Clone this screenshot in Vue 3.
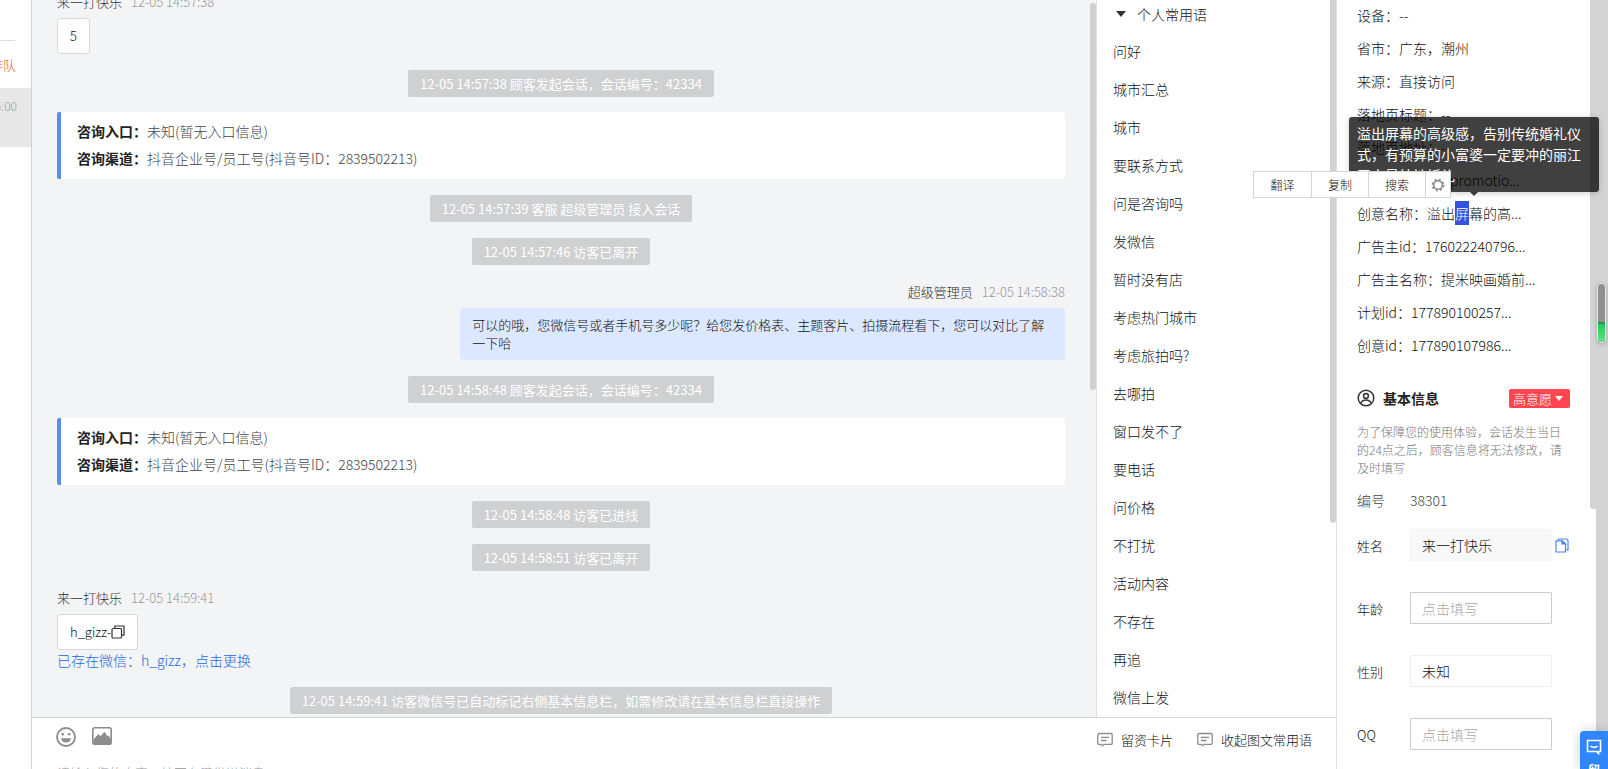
<script setup>
import { ref } from 'vue'

// --- 会话消息 ---
const messages = [
  { type: 'guest', name: '来一打快乐', time: '12-05 14:57:38', text: '5' },
  { type: 'notice', text: '12-05 14:57:38 顾客发起会话，会话编号：42334' },
  { type: 'entry', from: '未知(暂无入口信息)', channel: '抖音企业号/员工号(抖音号ID：2839502213)' },
  { type: 'notice', text: '12-05 14:57:39 客服 超级管理员 接入会话' },
  { type: 'notice', text: '12-05 14:57:46 访客已离开' },
  { type: 'staff', name: '超级管理员', time: '12-05 14:58:38', text: '可以的哦，您微信号或者手机号多少呢？给您发价格表、主题客片、拍摄流程看下，您可以对比了解一下哈' },
  { type: 'notice', text: '12-05 14:58:48 顾客发起会话，会话编号：42334' },
  { type: 'entry', from: '未知(暂无入口信息)', channel: '抖音企业号/员工号(抖音号ID：2839502213)' },
  { type: 'notice', text: '12-05 14:58:48 访客已进线' },
  { type: 'notice', text: '12-05 14:58:51 访客已离开' },
  { type: 'guest', name: '来一打快乐', time: '12-05 14:59:41', text: 'h_gizz-', copy: true, link: '已存在微信：h_gizz，点击更换' },
  { type: 'notice', text: '12-05 14:59:41 访客微信号已自动标记右侧基本信息栏，如需修改请在基本信息栏直接操作' }
]

// --- 常用语 ---
const phrases = [
  '问好', '城市汇总', '城市', '要联系方式', '问是咨询吗', '发微信', '暂时没有店', '考虑热门城市', '考虑旅拍吗?',
  '去哪拍', '窗口发不了', '要电话', '问价格', '不打扰', '活动内容', '不存在', '再追', '微信上发'
]

// --- 访客信息 ---
const visitTop = ['设备：--', '省市：广东，潮州', '来源：直接访问', '落地页标题：--', '落地页地址：--', '计划名称：dy_promotio...']
const visitBottom = ['广告主id：176022240796...', '广告主名称：提米映画婚前...', '计划id：177890100257...', '创意id：177890107986...']

const open = ref(true)
const draft = ref('')
const form = ref({ name: '来一打快乐', age: '', gender: '未知', qq: '' })
</script>

<template>
  <div class="page">
    <aside class="queue">
      <div class="queue-top"></div>
      <div class="queue-tab"><span>排队</span></div>
      <div class="queue-item"><span>14:56:00</span></div>
    </aside>

    <main class="main">
      <div class="work">
        <section class="chat">
          <div v-for="(m, i) in messages" :key="i" class="msg" :class="m.type">
            <template v-if="m.type === 'notice'">
              <span class="pill">{{ m.text }}</span>
            </template>
            <template v-else-if="m.type === 'entry'">
              <p><b>咨询入口：</b>{{ m.from }}</p>
              <p><b>咨询渠道：</b>{{ m.channel }}</p>
            </template>
            <template v-else>
              <div class="msg-head"><span class="who">{{ m.name }}</span><span class="time">{{ m.time }}</span></div>
              <div class="bubble">
                {{ m.text }}<svg v-if="m.copy" class="copy" viewBox="0 0 14 14" fill="none" stroke="#333" stroke-width="1.2">
                  <rect x="1" y="3.5" width="9.5" height="9.5" rx="1" />
                  <path d="M3.8 3.5V1h9.2v9.2h-2.5" />
                </svg>
              </div>
              <a v-if="m.link" href="#" class="swap">{{ m.link }}</a>
            </template>
          </div>
          <i class="thumb chat-thumb"></i>
        </section>

        <section class="phrases">
          <button class="group" @click="open = !open"><i class="caret"></i>个人常用语</button>
          <ul v-if="open">
            <li v-for="p in phrases" :key="p">{{ p }}</li>
          </ul>
          <i class="thumb phrase-thumb"></i>
        </section>
      </div>

      <footer class="editor">
        <div class="tools">
          <button class="tool" aria-label="表情">
            <svg width="20" height="20" viewBox="0 0 20 20">
              <circle cx="10" cy="10" r="9" fill="none" stroke="#8c8c8c" stroke-width="1.8" />
              <circle cx="6.8" cy="7.3" r="1.3" fill="#8c8c8c" />
              <circle cx="13.2" cy="7.3" r="1.3" fill="#8c8c8c" />
              <path d="M5 11.2h10c-.4 2.7-2.4 4.3-5 4.3s-4.6-1.6-5-4.3z" fill="#8c8c8c" />
            </svg>
          </button>
          <button class="tool" aria-label="图片">
            <svg width="20" height="18" viewBox="0 0 20 18">
              <rect x=".8" y=".8" width="18.4" height="16.4" rx="2" fill="none" stroke="#8c8c8c" stroke-width="1.6" />
              <path d="M1.500 12.500 6.500 7l2 2.300L12.500 4.800l3 4.400 1-.9 2.500 4.200V17h-17.500z" fill="#8c8c8c" />
            </svg>
          </button>
          <button v-for="t in ['留资卡片', '收起图文常用语']" :key="t" class="tool text-tool">
            <svg width="16" height="16" viewBox="0 0 16 16" fill="none" stroke="#8c8c8c" stroke-width="1.3">
              <path d="M2 2.500h12a1.200 1.200 0 0 1 1.200 1.200v8.500a1.200 1.200 0 0 1-1.200 1.200H7L5.500 14.700 4 13.400H2A1.200 1.200 0 0 1 .8 12.200v-8.500A1.200 1.200 0 0 1 2 2.500z" />
              <path d="M4 6.300h8M4 9.500h5.500" />
            </svg>
            {{ t }}
          </button>
        </div>
        <textarea v-model="draft" aria-label="消息" placeholder="请输入您的内容，按回车键发送消息"></textarea>
      </footer>
    </main>

    <aside class="detail">
      <div class="visit">
        <p v-for="v in visitTop" :key="v">{{ v }}</p>
        <p class="creative">
          创意名称：溢出<mark>屏</mark>幕的高...
          <span class="tip" role="tooltip">溢出屏幕的高级感，告别传统婚礼仪式，有预算的小富婆一定要冲的丽江天空最纯地婚礼</span>
          <span class="pick">
            <button>翻译</button>
            <button>复制</button>
            <button>搜索</button>
            <button class="gear" aria-label="设置">
              <svg width="14" height="14" viewBox="0 0 14 14" fill="none" stroke="#8a8a8a">
                <circle cx="7" cy="7" r="4.3" stroke-width="1.6" />
                <circle cx="7" cy="7" r="5.6" stroke-width="1.6" stroke-dasharray="2.2 2.198" />
              </svg>
            </button>
          </span>
        </p>
        <p v-for="v in visitBottom" :key="v">{{ v }}</p>
      </div>

      <div class="base-head">
        <svg width="18" height="18" viewBox="0 0 18 18" fill="none" stroke="#333" stroke-width="1.5">
          <circle cx="9" cy="9" r="7.8" />
          <circle cx="9" cy="6.9" r="2.4" />
          <path d="M3.8 14.3c.8-2.3 2.7-3.3 5.2-3.3s4.4 1 5.2 3.3" />
        </svg>
        <h3>基本信息</h3>
        <button class="intent">高意愿<i></i></button>
      </div>
      <p class="note">为了保障您的使用体验，会话发生当日的24点之后，顾客信息将无法修改，请及时填写</p>
      <div class="number"><span>编号</span><span>38301</span></div>

      <div class="row">
        <label for="f-name">姓名</label>
        <input id="f-name" v-model="form.name" class="filled" />
        <button class="row-copy" aria-label="复制姓名">
          <svg width="14" height="15" viewBox="0 0 14 15" fill="none" stroke="#4a86e8" stroke-width="1.2">
            <path d="M1 2.8h6.2L10.5 6v8H1z" />
            <path d="M7 2.8V6h3.5z" fill="#4a86e8" />
            <path d="M3.3 2.5V1h8.200L13 2.500v9.500h-2.200" />
          </svg>
        </button>
      </div>
      <div class="row">
        <label for="f-age">年龄</label>
        <input id="f-age" v-model="form.age" placeholder="点击填写" />
      </div>
      <div class="row">
        <label for="f-gender">性别</label>
        <select id="f-gender" v-model="form.gender">
          <option>未知</option>
          <option>男</option>
          <option>女</option>
        </select>
      </div>
      <div class="row">
        <label for="f-qq">QQ</label>
        <input id="f-qq" v-model="form.qq" placeholder="点击填写" />
      </div>
      <i class="thumb detail-thumb"></i>
    </aside>

    <div class="strip"></div>
    <div class="gauge"><i></i></div>
    <button class="service">
      <svg width="16" height="16" viewBox="0 0 16 16" fill="none" stroke="#fff" stroke-width="1.6">
        <path d="M1.500 1.500h13v11H12.500v2L10.500 12.500h-9z" />
        <path d="M4.5 7c1.800 1.800 5.200 1.800 7 0" />
      </svg>
      <span>留言</span>
    </button>
  </div>
</template>

<style>
body { margin: 0; }
</style>

<style scoped>
.page { position: relative; display: flex; height: 100vh; overflow: hidden; background: #fff; color: #111; font-family: 'Noto Sans CJK SC', sans-serif; font-size: 14px; font-weight: 300; }
* { box-sizing: border-box; }
p, h3, ul { margin: 0; padding: 0; }
button, input, select, textarea { font: inherit; color: inherit; margin: 0; padding: 0; border: 0; background: none; border-radius: 0; outline: none; }
button { cursor: pointer; }
svg { display: block; flex: none; }
.thumb { position: absolute; right: 0; top: 0; width: 6px; border-radius: 3px; background: #d2d2d2; }

/* 左侧排队列表 */
.queue { width: 32px; flex: none; border-right: 1px solid #d0d3d8; overflow: hidden; }
.queue-top { width: 15px; height: 41px; border-bottom: 1px solid #ddd; }
.queue-tab, .queue-item { display: flex; justify-content: flex-end; white-space: nowrap; }
.queue-tab { height: 47px; line-height: 48px; padding-right: 15px; color: #e8601c; font-size: 13px; }
.queue-item { height: 59px; line-height: 36px; padding-right: 14px; background: #e8e8e8; color: #999; font-size: 12px; }

/* 会话 */
.main { flex: 1; min-width: 0; display: flex; flex-direction: column; }
.work { flex: 1; min-height: 0; display: flex; }
.chat { position: relative; flex: 1; min-width: 0; display: flex; flex-direction: column; justify-content: flex-end; padding: 0 31px 3px 25px; background: #f3f4f6; overflow: hidden; }
.chat-thumb { top: 3px; height: 54%; background: #d0d0d0; }
.msg { flex: none; margin-top: 16px; }
.notice { display: flex; justify-content: center; }
.pill { padding: 0 12px; line-height: 27px; border-radius: 2px; background: #cfd0d2; color: #fff; font-size: 13px; font-weight: 400; }
.entry { padding: 6px 16px 7px; border-left: 4px solid #5590ee; border-radius: 2px; background: #fff; color: #444; line-height: 27px; }
.notice + .entry { margin-top: 15px; }
.entry b { color: #222; font-weight: 700; }
.guest, .staff { display: flex; flex-direction: column; align-items: flex-start; font-size: 13px; }
.staff { align-items: flex-end; }
.msg-head { display: flex; gap: 9px; height: 22px; line-height: 22px; margin-bottom: 5px; }
.who { color: #333; }
.time { color: #999; }
.bubble { display: flex; align-items: center; padding: 8px 12px; border: 1px solid #d5d7da; border-radius: 3px; background: #fff; line-height: 18px; }
.staff .bubble { width: 60%; padding: 8px 12px; border: 0; background: #dce8ff; }
.copy { width: 14px; height: 14px; }
.swap { color: #1f66e0; text-decoration: none; font-size: 14px; line-height: 21px; }

/* 常用语 */
.phrases { position: relative; width: 240px; flex: none; border-left: 1px solid #dcdee2; overflow: hidden; }
.phrase-thumb { height: 73%; border-radius: 0 0 3px 3px; }
.group { display: flex; align-items: center; gap: 11px; height: 28px; margin-bottom: 4px; padding-left: 19px; }
.caret { border: 5px solid transparent; border-top: 6px solid #333; border-bottom: 0; }
.phrases ul { list-style: none; }
.phrases li { padding-left: 16px; line-height: 38px; }

/* 输入区 */
.editor { height: 52px; flex: none; border-top: 1px solid #d0d3d8; overflow: hidden; }
.tools { display: flex; align-items: flex-start; gap: 16px; height: 44px; padding: 9px 24px 0; }
.tool { display: flex; align-items: center; }
.text-tool { gap: 8px; height: 24px; margin-left: 8px; font-size: 13px; }
.tool:nth-child(3) { margin-left: auto; }
.editor textarea { display: block; width: 100%; height: 40px; padding: 0 25px; resize: none; font-size: 13px; line-height: 22px; }
.editor textarea::placeholder { color: #999; }

/* 访客信息 */
.detail { position: relative; width: 260px; flex: none; padding: 0 26px 0 20px; border-left: 1px solid #dcdee2; }
.detail-thumb { height: 509px; border-radius: 0 0 0 3px; background: #d4d4d4; }
.visit { margin-top: -1px; }
.visit p { line-height: 33px; white-space: nowrap; }
.creative { position: relative; }
mark { padding: 2px 0; background: #3353dc; color: #fff; }
.tip { position: absolute; left: -8px; bottom: 38px; z-index: 2; width: 250px; height: 75px; padding: 6px 16px 0 8px; border-radius: 3px; background: rgba(0, 0, 0, .75); color: #fff; font-weight: 400; line-height: 21px; white-space: normal; box-shadow: 0 1px 6px rgba(0, 0, 0, .2); }
.tip::after { content: ''; position: absolute; left: 50%; top: 100%; margin-left: -4px; border: 4px solid transparent; border-top-color: rgba(0, 0, 0, .75); border-bottom: 0; }
.pick { position: absolute; left: -104px; bottom: 32px; z-index: 3; display: flex; height: 27px; border: 1px solid #d5d5d5; background: #fff; font-size: 12px; line-height: 25px; }
.pick button { width: 57px; }
.pick button + button { border-left: 1px solid #d5d5d5; }
.pick .gear { display: flex; align-items: center; justify-content: center; width: 25px; }

.base-head { display: flex; align-items: center; height: 24px; margin-top: 24px; }
.base-head h3 { margin-left: 8px; font-size: 14px; font-weight: 700; color: #222; }
.intent { display: flex; align-items: center; gap: 3px; height: 19px; margin-left: auto; padding: 0 7px 0 4px; border-radius: 2px; background: #ff4551; color: #fff; font-size: 13px; }
.intent i { border: 4px solid transparent; border-top: 5px solid #fff; border-bottom: 0; }
.note { margin-top: 13px; color: #777; font-size: 12px; line-height: 18px; }
.number { display: flex; height: 52px; line-height: 46px; color: #444; }
.number span:first-child { width: 53px; }
.row { display: flex; align-items: center; height: 32px; margin-bottom: 31px; }
.row label { width: 53px; flex: none; font-size: 13px; }
.row input, .row select { width: 142px; height: 32px; padding: 0 11px; border: 1px solid #ccc; border-radius: 1px; font-size: 14px; }
.row input.filled { border-color: #f5f5f5; background: #f8f8f8; }
.row select { appearance: none; border-color: #eee; }
.row input::placeholder { color: #aaa; }
.row-copy { margin-left: 3px; }

/* 右侧悬浮 */
.strip { width: 12px; flex: none; background: #d4d4d4; }
.gauge { position: absolute; right: 2px; top: 283px; width: 9px; height: 60px; border: 1px solid #e8e8e8; border-radius: 4px; background: #8f8f8f; overflow: hidden; box-shadow: 0 1px 4px rgba(0, 0, 0, .25); }
.gauge i { position: absolute; left: 0; right: 0; bottom: 0; height: 20px; border-top: 2px solid #2a9150; background: linear-gradient(#1ecb55, #63e388); }
.service { position: absolute; right: 0; bottom: 0; display: flex; flex-direction: column; align-items: center; gap: 8px; width: 28px; height: 38px; padding-top: 8px; border-radius: 4px 0 0 0; background: #2f86fb; color: #fff; overflow: hidden; font-size: 12px; font-weight: 700; line-height: 14px; box-shadow: 0 0 12px rgba(0, 0, 0, .2); }
.service span { width: 12px; }
</style>
